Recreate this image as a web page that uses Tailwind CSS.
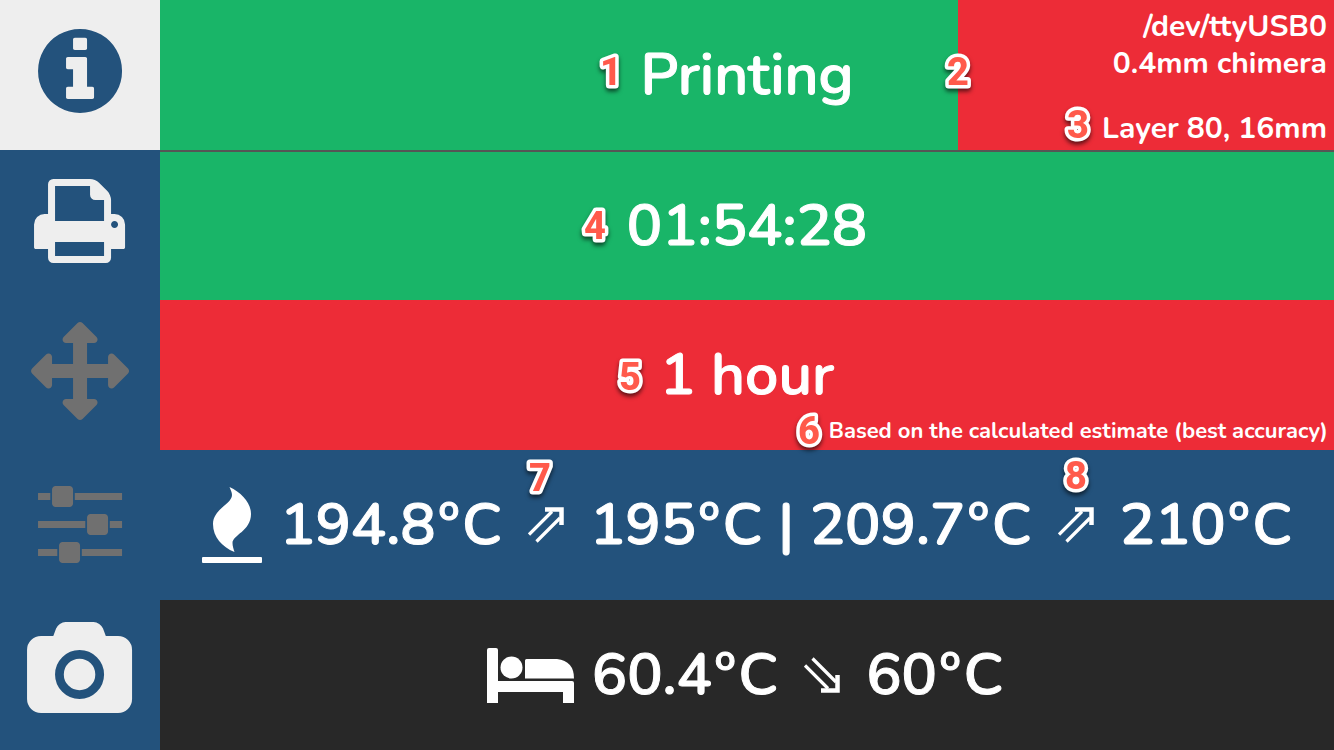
<!DOCTYPE html>
<html lang="en">
<head>
<meta charset="utf-8">
<meta name="viewport" content="width=device-width, initial-scale=1">
<title>Printer status</title>
<script src="https://cdn.jsdelivr.net/npm/@tailwindcss/browser@4"></script>
</head>
<body class="bg-[#282828]">
<svg class="hidden" aria-hidden="true">
  <symbol id="rise" viewBox="0 0 36 36">
    <path d="M17 2.500H33.500V18" fill="none" stroke="currentColor" stroke-width="4.500"/>
    <path d="M1 27.500L24 4.500M8.500 34.500L32 11" fill="none" stroke="currentColor" stroke-width="3.200"/>
  </symbol>
</svg>
<div class="flex h-screen min-h-[600px] font-['Nunito','Noto_Sans',sans-serif] font-semibold text-white">
  <nav class="grid w-[12%] shrink-0 grid-rows-5 bg-[#23527c] text-[#eee]" aria-label="Sections">
    <button type="button" aria-label="Status" aria-current="page" class="min-h-0 bg-[#eee] text-[#23527c]">
      <svg class="size-full" viewBox="0 0 160 150" fill="currentColor"><path transform="translate(38 106) scale(.0547 -.0547)" d="M1024 160v160q0 14-9 23t-23 9h-96v512q0 14-9 23t-23 9h-320q-14 0-23-9t-9-23v-160q0-14 9-23t23-9h96v-320h-96q-14 0-23-9t-9-23v-160q0-14 9-23t23-9h448q14 0 23 9t9 23zM896 1056v160q0 14-9 23t-23 9h-192q-14 0-23-9t-9-23v-160q0-14 9-23t23-9h192q14 0 23 9t9 23zM1536 640q0-209-103-385.500t-279.500-279.500t-385.500-103t-385.500 103t-279.500 279.500t-103 385.500t103 385.500t279.500 279.500t385.500 103t385.500-103t279.500-279.500t103-385.500z"/></svg>
    </button>
    <button type="button" aria-label="Print" class="min-h-0">
      <svg class="size-full" viewBox="0 0 160 150" fill="currentColor"><path transform="translate(34 106) scale(.0547 -.0547)" d="M384 0h896v256h-896v-256zM384 640h896v384h-160q-40 0-68 28t-28 68v160h-640v-640zM1536 576q0 26-19 45t-45 19t-45-19t-19-45t19-45t45-19t45 19t19 45zM1664 576v-416q0-13-9.500-22.500t-22.500-9.500h-224v-160q0-40-28-68t-68-28h-960q-40 0-68 28t-28 68v160h-224q-13 0-22.500 9.500t-9.500 22.500v416q0 79 56.500 135.500t135.500 56.500h64v544q0 40 28 68t68 28h672q40 0 88-20t76-48l152-152q28-28 48-76t20-88v-256h64q79 0 135.500-56.500t56.500-135.500z" fill-rule="evenodd"/></svg>
    </button>
    <button type="button" aria-label="Move" disabled class="min-h-0 text-[#707070]">
      <svg class="size-full" viewBox="0 0 160 150" fill="currentColor"><path transform="translate(31 106) scale(.0547 -.0547)" d="M1792 640q0-26-19-45l-256-256q-19-19-45-19t-45 19t-19 45v128h-384v-384h128q26 0 45-19t19-45t-19-45l-256-256q-19-19-45-19t-45 19l-256 256q-19 19-19 45t19 45t45 19h128v384h-384v-128q0-26-19-45t-45-19t-45 19l-256 256q-19 19-19 45t19 45l256 256q19 19 45 19t45-19t19-45v-128h384v384h-128q-26 0-45 19t-19 45t19 45l256 256q19 19 45 19t45-19l256-256q19-19 19-45t-19-45t-45-19h-128v-384h384v128q0 26 19 45t45 19t45-19l256-256q19-19 19-45z"/></svg>
    </button>
    <button type="button" aria-label="Adjust" disabled class="min-h-0 text-[#707070]">
      <svg class="size-full" viewBox="0 0 160 150" fill="currentColor"><path transform="translate(38 106) scale(.0547 -.0547)" d="M352 128v-128h-352v128h352zM704 256q26 0 45-19t19-45v-256q0-26-19-45t-45-19h-256q-26 0-45 19t-19 45v256q0 26 19 45t45 19h256zM864 640v-128h-864v128h864zM224 1152v-128h-224v128h224zM1536 128v-128h-736v128h736zM576 1280q26 0 45-19t19-45v-256q0-26-19-45t-45-19h-256q-26 0-45 19t-19 45v256q0 26 19 45t45 19h256zM1216 768q26 0 45-19t19-45v-256q0-26-19-45t-45-19h-256q-26 0-45 19t-19 45v256q0 26 19 45t45 19h256zM1536 640v-128h-224v128h224zM1536 1152v-128h-864v128h864z"/></svg>
    </button>
    <button type="button" aria-label="Camera" class="min-h-0">
      <svg class="size-full" viewBox="0 0 160 150" fill="currentColor"><path transform="translate(27 106) scale(.0547 -.0547)" d="M960 864q119 0 203.500-84.500t84.500-203.500t-84.500-203.500t-203.500-84.500t-203.500 84.500t-84.500 203.500t84.500 203.500t203.500 84.500zM1664 1280q106 0 181-75t75-181v-896q0-106-75-181t-181-75h-1408q-106 0-181 75t-75 181v896q0 106 75 181t181 75h224l51 136q19 49 69.500 84.500t103.500 35.500h512q53 0 103.500-35.500t69.500-84.500l51-136h224zM960 128q185 0 316.500 131.500t131.500 316.500t-131.500 316.500t-316.500 131.500t-316.500-131.500t-131.500-316.500t131.500-316.500t316.500-131.500z"/></svg>
    </button>
  </nav>

  <main class="grid min-w-0 flex-1 grid-rows-5 text-[59px] leading-[60px] whitespace-nowrap [-webkit-text-stroke:1px_white]">
    <section class="relative flex items-center justify-center bg-[#ed2c37]">
      <div class="absolute inset-y-0 left-0 w-[68%] bg-[#19b568]">
        <svg class="absolute top-[52px] left-full h-10 w-8 -translate-x-1/2 overflow-visible fill-[#ff5a4b] stroke-white stroke-[7px] font-['Roboto',Arial,sans-serif] text-[38px] font-extrabold drop-shadow-[0_3px_2px_rgb(0_0_0/0.6)] [paint-order:stroke_fill] [stroke-linejoin:round]"><text x="16" y="33" text-anchor="middle">2</text></svg>
      </div>
      <div class="relative">
        <h1>Printing</h1>
        <svg class="absolute top-[7px] right-full mr-[14px] h-10 w-8 overflow-visible fill-[#ff5a4b] stroke-white stroke-[7px] font-['Roboto',Arial,sans-serif] text-[38px] font-extrabold drop-shadow-[0_3px_2px_rgb(0_0_0/0.6)] [paint-order:stroke_fill] [stroke-linejoin:round]"><text x="16" y="33" text-anchor="middle">1</text></svg>
      </div>
      <div class="absolute inset-y-0 right-0 flex flex-col justify-between pt-2 pr-[7px] pb-[3px] text-right text-[30px] leading-[37px] font-bold [-webkit-text-stroke:0]">
        <p>/dev/ttyUSB0<br>0.4mm chimera</p>
        <div class="relative">
          <p>Layer 80, 16mm</p>
          <svg class="absolute -top-[5px] right-full mr-2 h-10 w-8 overflow-visible fill-[#ff5a4b] stroke-white stroke-[7px] font-['Roboto',Arial,sans-serif] text-[38px] font-extrabold drop-shadow-[0_3px_2px_rgb(0_0_0/0.6)] [paint-order:stroke_fill] [stroke-linejoin:round]"><text x="16" y="33" text-anchor="middle">3</text></svg>
        </div>
      </div>
    </section>

    <section class="flex items-center justify-center border-t-2 border-[#555] bg-[#19b568]">
      <div class="relative">
        <p>01:54:28</p>
        <svg class="absolute top-[10px] right-full mr-4 h-10 w-8 overflow-visible fill-[#ff5a4b] stroke-white stroke-[7px] font-['Roboto',Arial,sans-serif] text-[38px] font-extrabold drop-shadow-[0_3px_2px_rgb(0_0_0/0.6)] [paint-order:stroke_fill] [stroke-linejoin:round]"><text x="16" y="33" text-anchor="middle">4</text></svg>
      </div>
    </section>

    <section class="relative flex items-center justify-center bg-[#ed2c37]">
      <div class="relative">
        <p>1 hour</p>
        <svg class="absolute top-3 right-full mr-[14px] h-10 w-8 overflow-visible fill-[#ff5a4b] stroke-white stroke-[7px] font-['Roboto',Arial,sans-serif] text-[38px] font-extrabold drop-shadow-[0_3px_2px_rgb(0_0_0/0.6)] [paint-order:stroke_fill] [stroke-linejoin:round]"><text x="16" y="33" text-anchor="middle">5</text></svg>
      </div>
      <div class="absolute right-[6px] bottom-1 z-10 text-[22px] leading-[30px] font-bold [-webkit-text-stroke:0]">
        <p>Based on the calculated estimate (best accuracy)</p>
        <svg class="absolute -top-[5px] right-full mr-1 h-10 w-8 overflow-visible fill-[#ff5a4b] stroke-white stroke-[7px] font-['Roboto',Arial,sans-serif] text-[38px] font-extrabold drop-shadow-[0_3px_2px_rgb(0_0_0/0.6)] [paint-order:stroke_fill] [stroke-linejoin:round]"><text x="16" y="33" text-anchor="middle">6</text></svg>
      </div>
    </section>

    <section class="flex items-center justify-center gap-[26px] bg-[#23527c]">
      <div class="flex items-center gap-[18px]">
        <svg class="h-[76px] w-[60px]" viewBox="0 0 60 76" fill="currentColor" role="img" aria-label="Hotend"><path d="M27.500 0C40 6 49 16 49 27C49 44 30.500 48 30.500 56C30.500 59 31.500 62 32.500 65C20 60 11 50 11 37C11 22 30 17 30 8C30 5 28.500 3 27.500 0z"/><rect y="70" width="60" height="6" rx="1"/></svg>
        <p>194.8<span class="mx-[3px]">º</span>C</p>
      </div>
      <div class="relative">
        <svg class="size-9" role="img" aria-label="heating to"><use href="#rise"/></svg>
        <svg class="absolute bottom-[45px] left-1/2 h-10 w-8 -translate-x-[22px] overflow-visible fill-[#ff5a4b] stroke-white stroke-[7px] font-['Roboto',Arial,sans-serif] text-[38px] font-extrabold drop-shadow-[0_3px_2px_rgb(0_0_0/0.6)] [paint-order:stroke_fill] [stroke-linejoin:round]"><text x="16" y="33" text-anchor="middle">7</text></svg>
      </div>
      <p>195<span class="mx-[3px]">º</span>C | 209.7<span class="mx-[3px]">º</span>C</p>
      <div class="relative">
        <svg class="size-9" role="img" aria-label="heating to"><use href="#rise"/></svg>
        <svg class="absolute bottom-[47px] left-1/2 h-10 w-8 -translate-x-1/2 overflow-visible fill-[#ff5a4b] stroke-white stroke-[7px] font-['Roboto',Arial,sans-serif] text-[38px] font-extrabold drop-shadow-[0_3px_2px_rgb(0_0_0/0.6)] [paint-order:stroke_fill] [stroke-linejoin:round]"><text x="16" y="33" text-anchor="middle">8</text></svg>
      </div>
      <p>210<span class="mx-[3px]">º</span>C</p>
    </section>

    <section class="flex items-center justify-center gap-[26px] bg-[#282828] pr-1">
      <div class="flex items-center gap-[18px]">
        <svg class="h-[55px] w-[87px]" viewBox="0 0 87 55" fill="currentColor" role="img" aria-label="Bed"><path d="M2 0H9Q11 0 11 2V33H85Q87 33 87 35V55H76V44H11V55H0V2Q0 0 2 0z"/><circle cx="24.500" cy="19.500" r="11"/><path d="M38 12.500Q38 11 39.500 11H70Q87 13 87 30.500H38z"/></svg>
        <p>60.4<span class="mx-[3px]">º</span>C</p>
      </div>
      <svg class="size-9 -scale-y-100" role="img" aria-label="cooling to"><use href="#rise"/></svg>
      <p>60<span class="mx-[3px]">º</span>C</p>
    </section>
  </main>
</div>
</body>
</html>
